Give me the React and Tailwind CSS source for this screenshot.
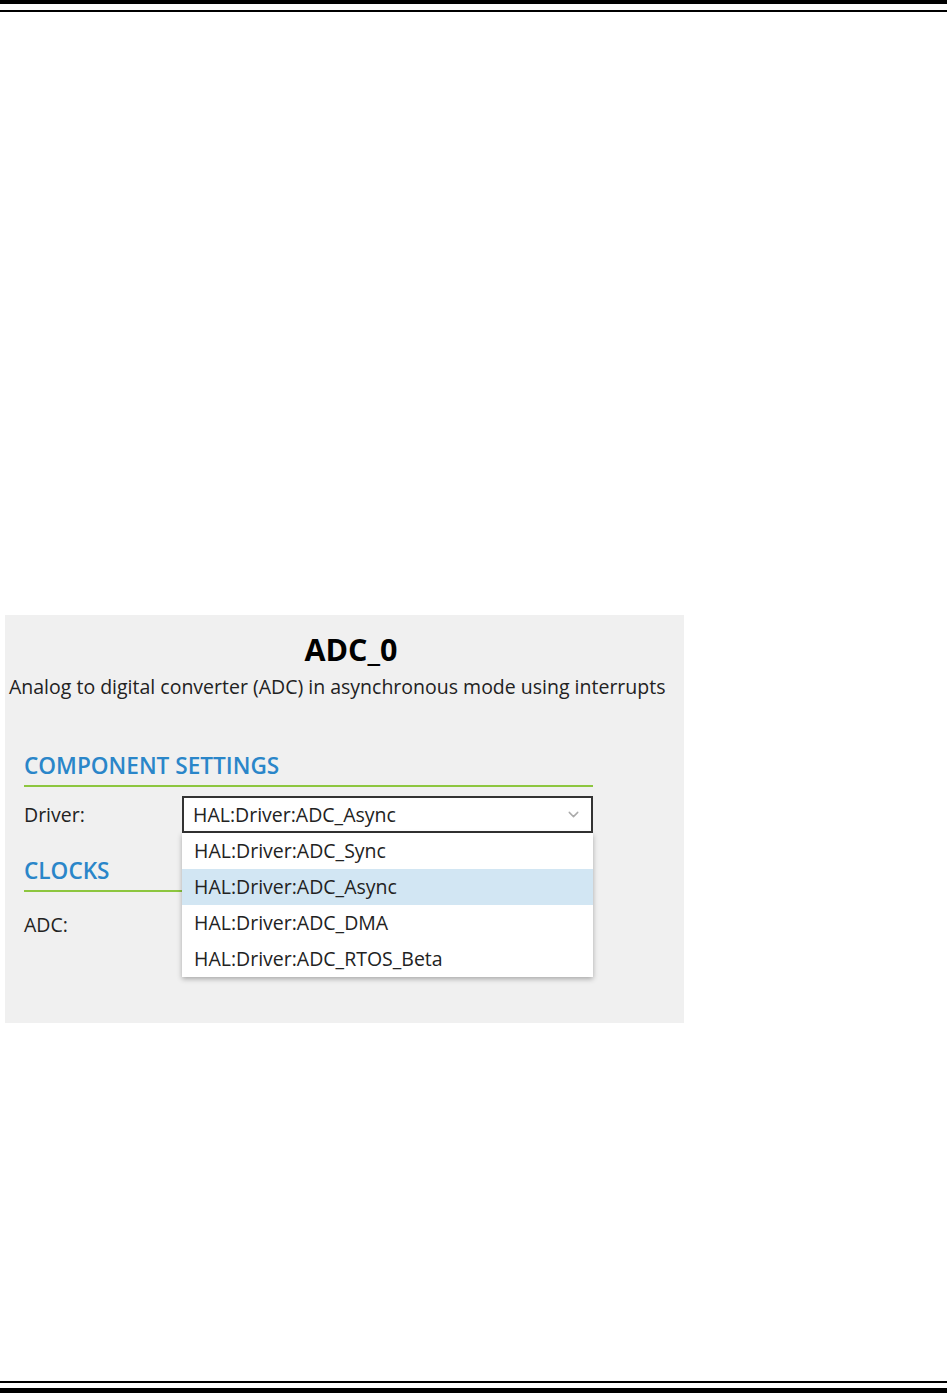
import React from "react";
import { FiChevronDown } from "react-icons/fi";

const options = [
  "HAL:Driver:ADC_Sync",
  "HAL:Driver:ADC_Async",
  "HAL:Driver:ADC_DMA",
  "HAL:Driver:ADC_RTOS_Beta",
];

export default function App() {
  return (
    <div
      className="w-[947px] h-[1393px] bg-white flex flex-col"
      style={{ fontFamily: '"Open Sans", "Noto Sans", sans-serif' }}
    >
      <div className="h-[4px] bg-black" />
      <div className="h-[2px] bg-black mt-[6px]" />

      <div className="flex-1 pt-[603px]">
        <div className="ml-[5px] w-[679px] h-[408px] bg-[#f0f0f0] pt-[14px]">
          <h1 className="text-center pl-[13px] text-[30.5px] font-bold leading-[40px] text-black">
            ADC_0
          </h1>
          <p className="mt-[5px] pl-[4px] text-[19.5px] leading-[26px] text-[#222] whitespace-nowrap">
            Analog to digital converter (ADC) in asynchronous mode using interrupts
          </p>

          <div className="pl-[19px] pt-[51px]">
            <div className="w-[569px] text-[22.6px] font-semibold leading-[30px] text-[#2a86c9] border-b-2 border-[#8dc63f] pb-[4px]">
              COMPONENT SETTINGS
            </div>

            <div className="flex items-center mt-[9px] h-[37px]">
              <span className="w-[158px] text-[19.5px] text-[#222]">Driver:</span>
              <div className="relative">
                <div className="w-[411px] h-[37px] bg-white border-2 border-[#333] flex items-center justify-between pl-[9px] pr-[9px] text-[19.5px] text-[#222]">
                  <span>HAL:Driver:ADC_Async</span>
                  <FiChevronDown className="w-[17px] h-[17px] text-[#aaa]" />
                </div>
                <div className="absolute left-0 top-[37px] w-[411px] bg-white shadow-[0_2px_5px_rgba(0,0,0,0.3)] z-10">
                  {options.map((o, i) => (
                    <div
                      key={o}
                      className={
                        "h-[36px] flex items-center pl-[12px] text-[19.5px] text-[#222] " +
                        (i === 1 ? "bg-[#d2e6f3]" : "")
                      }
                    >
                      {o}
                    </div>
                  ))}
                </div>
              </div>
            </div>

            <div className="w-[569px] mt-[23px] text-[22.6px] font-semibold leading-[30px] text-[#2a86c9] border-b-2 border-[#8dc63f] pb-[4px]">
              CLOCKS
            </div>
            <div className="mt-[20px] text-[19.5px] leading-[26px] text-[#222]">ADC:</div>
          </div>
        </div>
      </div>

      <div className="h-[2px] bg-black" />
      <div className="h-[5px] bg-black mt-[5px]" />
    </div>
  );
}
